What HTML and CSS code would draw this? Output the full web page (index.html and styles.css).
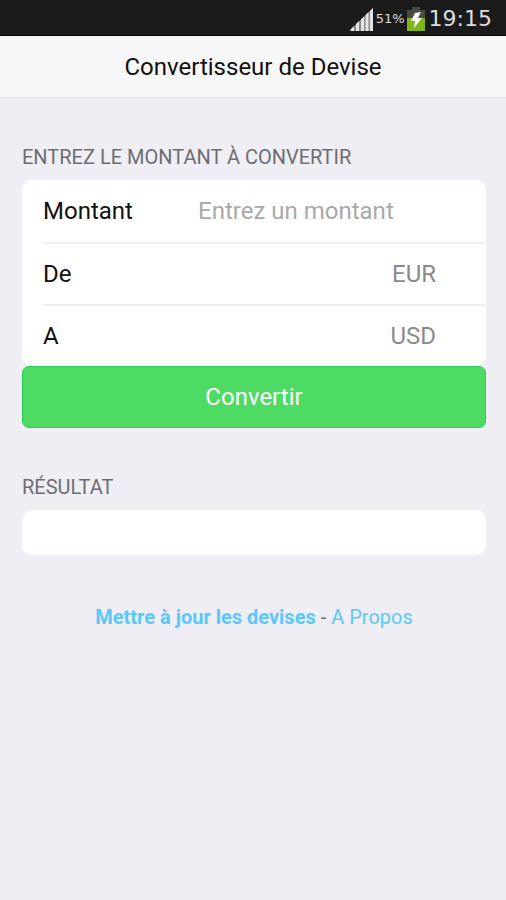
FILE: index.html
```html
<!DOCTYPE html>
<html lang="fr">
<head>
<meta charset="utf-8">
<meta name="viewport" content="width=device-width, initial-scale=1">
<title>Convertisseur de Devise</title>
<link rel="stylesheet" href="styles.css">
</head>
<body>
<div class="status">
  <svg class="signal" viewBox="0 0 24 24" aria-hidden="true"><path fill="#8a8a8a" d="M0 24L24 1v23z"/><path fill="#e4e4e4" d="M2 22l3-3v5H2zM7 17l3-3v10H7zM12 12.500l3-3V24h-3zM16.500 8l3-3v19h-3zM21 4l3-3v23h-3z"/></svg>
  <span class="percent">51%</span>
  <svg class="battery" viewBox="0 0 18 24" aria-hidden="true"><path fill="#484a48" d="M5 0h8v3h5v8H0V3h5z"/><path fill="#7db616" d="M0 11h18v13H0z"/><path fill="#fff" d="M8 6l6-1-3 6h4L7 21l1-7H4z"/></svg>
  <span class="clock">19:15</span>
</div>
<header class="bar"><h1>Convertisseur de Devise</h1></header>
<main>
  <form>
    <h2>ENTREZ LE MONTANT À CONVERTIR</h2>
    <div class="card">
      <div class="row"><label for="amount">Montant</label><input id="amount" type="text" placeholder="Entrez un montant"></div>
      <div class="row"><label for="from">De</label><select id="from"><option>EUR</option><option>USD</option></select></div>
      <div class="row"><label for="to">A</label><select id="to"><option>USD</option><option>EUR</option></select></div>
    </div>
    <button type="button">Convertir</button>
  </form>
  <h2>RÉSULTAT</h2>
  <output class="result"></output>
  <p class="links"><a class="update" href="#">Mettre à jour les devises</a> - <a href="#">A Propos</a></p>
</main>
</body>
</html>
```

FILE: styles.css
```css
* { box-sizing: border-box; }
body { margin: 0; min-height: 100vh; background: #efeef4; color: #111; font-family: Roboto, "Liberation Sans", sans-serif; font-size: 24px; }
.status { display: flex; align-items: center; justify-content: flex-end; height: 36px; padding: 2px 14px 0; background: #1b1b1b; border-bottom: 1px solid #080808; color: #ddd; font-family: "DejaVu Sans", sans-serif; }
.signal { width: 24px; height: 24px; }
.percent { margin-left: 3px; font-size: 13px; font-weight: 400; }
.battery { width: 18px; height: 24px; margin-left: 2px; }
.clock { margin-left: 4px; font-size: 22px; }
.bar { display: flex; align-items: center; justify-content: center; height: 62px; background: #f7f7f8; border-bottom: 1px solid #e4e4e8; }
h1 { margin: 0; font-size: 24px; font-weight: 400; }
main { padding: 47px 20px 0 22px; }
h2 { margin: 0 0 11px; font-size: 20px; line-height: 24px; font-weight: 400; color: #6d6d72; }
.card { background: #fff; border-radius: 10px; padding-left: 21px; }
.row { display: flex; align-items: center; height: 62px; }
.row + .row { border-top: 2px solid #efeff1; }
label { flex: 0 0 35%; }
input, select { flex: 1; min-width: 0; border: 0; padding: 0; background: none; font: inherit; color: #8a8a8e; appearance: none; outline: 0; }
input::placeholder { color: #a9a9a9; opacity: 1; }
select { padding-right: 50px; text-align: right; text-align-last: right; }
button { display: block; width: 100%; height: 62px; border: 1px solid #2bcf50; border-radius: 7px; background: #4ddb63; color: #fff; font: inherit; }
form { margin-bottom: 47px; }
.result { display: block; height: 45px; background: #fff; border-radius: 10px; }
.links { margin: 48px 0 0; text-align: center; font-size: 20px; line-height: 28px; color: #6d6d72; }
a { color: #5ac8fa; text-decoration: none; }
.update { font-weight: 700; }
```
